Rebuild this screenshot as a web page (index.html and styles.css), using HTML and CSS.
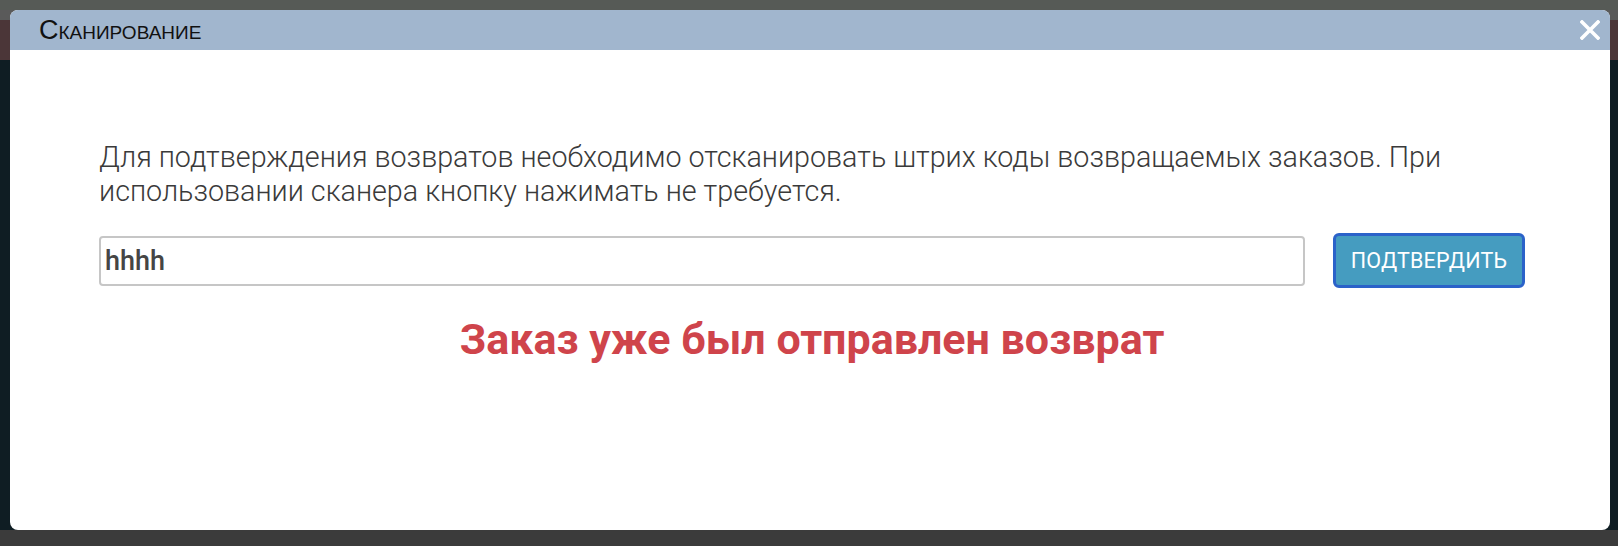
FILE: index.html
```html
<!DOCTYPE html>
<html lang="ru">
<head>
<meta charset="utf-8">
<title>Сканирование</title>
<link rel="stylesheet" href="styles.css">
</head>
<body>
<div class="modal">
  <div class="modal-header">
    <span class="modal-title">Сканирование</span>
    <button class="close" aria-label="Закрыть">
      <svg width="20" height="20" viewBox="0 0 20 20"><path d="M2 2 L18 18 M18 2 L2 18" stroke="#fff" stroke-width="3.6" stroke-linecap="square"/></svg>
    </button>
  </div>
  <div class="modal-body">
    <p class="hint">Для подтверждения возвратов необходимо отсканировать штрих коды возвращаемых заказов. При использовании сканера кнопку нажимать не требуется.</p>
    <div class="scan-row">
      <input class="scan-input" type="text" value="hhhh">
      <button class="confirm">ПОДТВЕРДИТЬ</button>
    </div>
    <div class="error">Заказ уже был отправлен возврат</div>
  </div>
</div>
</body>
</html>
```

FILE: styles.css
```css
html, body {
  margin: 0;
  height: 100%;
}
body {
  padding: 10px 8px 16px 10px;
  box-sizing: border-box;
  font-family: Roboto, "Liberation Sans", sans-serif;
  background:
    linear-gradient(to bottom, #565a56 0 10px, transparent 10px),
    linear-gradient(to bottom, #5a5a5a 0 20px, #4b3638 20px 60px, transparent 60px),
    linear-gradient(to top, #3b3b3b 0 16px, transparent 16px),
    #0f1d23;
}
.modal {
  width: 1600px;
  height: 520px;
  background: #fff;
  border-radius: 8px;
  overflow: hidden;
  display: flex;
  flex-direction: column;
}
.modal-header {
  height: 40px;
  flex: none;
  background: #a1b6ce;
  display: flex;
  align-items: center;
  justify-content: space-between;
  padding: 0 10px 0 29px;
}
.modal-title {
  font-family: "Liberation Sans", Arial, sans-serif;
  font-variant: small-caps;
  font-size: 27px;
  color: #111;
  line-height: 1;
}
.close {
  border: 0;
  background: none;
  padding: 0;
  width: 20px;
  height: 20px;
  display: flex;
}
.modal-body {
  padding: 90px 85px 0 89px;
}
.hint {
  margin: 0;
  font-size: 28.7px;
  font-weight: 300;
  line-height: 34px;
  color: #3a3a3a;
}
.scan-row {
  margin-top: 25px;
  display: flex;
  align-items: center;
  gap: 28px;
}
.scan-input {
  flex: 1;
  height: 50px;
  box-sizing: border-box;
  border: 2px solid #c6c6c6;
  border-radius: 4px;
  padding: 0 4px;
  font-family: Roboto, sans-serif;
  font-weight: 500;
  font-size: 27px;
  color: #454545;
  outline: none;
}
.confirm {
  width: 192px;
  height: 55px;
  box-sizing: border-box;
  background: #459cc0;
  border: 3px solid #2b62c9;
  border-radius: 6px;
  color: #fff;
  font-family: Roboto, sans-serif;
  font-size: 21.5px;
  letter-spacing: 0.2px;
  padding: 0;
}
.error {
  margin-top: 27px;
  text-align: center;
  font-size: 43px;
  line-height: 48px;
  font-weight: 700;
  color: #cf444b;
}
```
